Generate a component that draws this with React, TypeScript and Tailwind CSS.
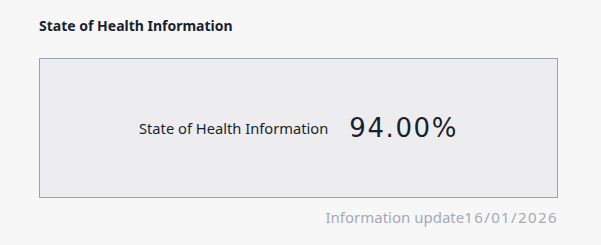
export default function App() {
  return (
    <div className="min-h-[245px] w-full bg-[#f7f7f7] px-[39px] pt-[16px] font-['Noto_Sans',sans-serif] text-[#1a1f2e]">
      <h2 className="text-[14px] font-bold leading-[20px]">State of Health Information</h2>
      <div className="mt-[22px] flex h-[140px] w-[519px] items-center justify-center gap-[21px] border border-[#9aa2ad] bg-[#ededef]">
        <span className="text-[14.7px]">State of Health Information</span>
        <span className="text-[26px] tracking-[1.6px] font-['DejaVu_Sans',sans-serif]">94.00%</span>
      </div>
      <div className="mt-[8px] w-[519px] text-right text-[15px] text-[#a2aab5]">
        Information update<span className="tracking-[1.4px]">16/01/2026</span>
      </div>
    </div>
  );
}
